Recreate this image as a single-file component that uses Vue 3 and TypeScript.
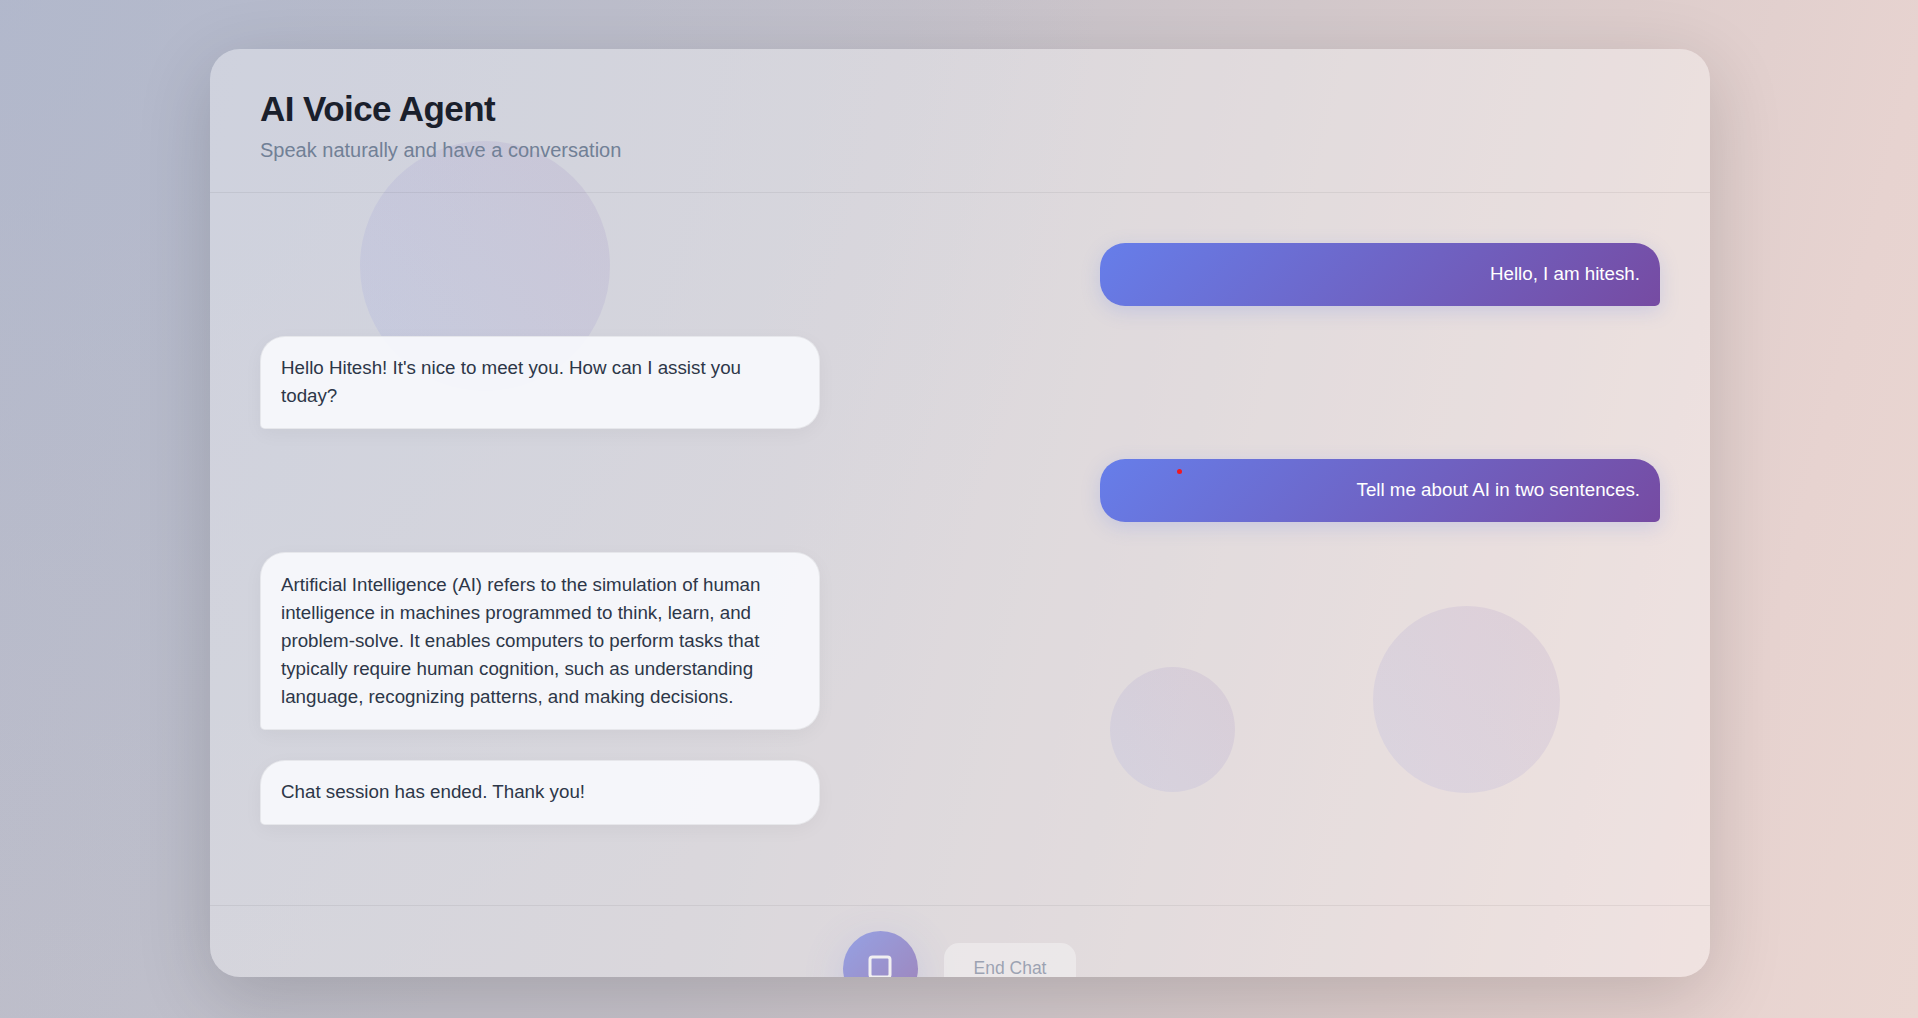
<script setup lang="ts">
interface Message {
  id: number
  role: 'user' | 'agent'
  text: string
}

const messages: Message[] = [
  { id: 1, role: 'user', text: 'Hello, I am hitesh.' },
  { id: 2, role: 'agent', text: "Hello Hitesh! It's nice to meet you. How can I assist you today?" },
  { id: 3, role: 'user', text: 'Tell me about AI in two sentences.' },
  {
    id: 4,
    role: 'agent',
    text: 'Artificial Intelligence (AI) refers to the simulation of human intelligence in machines programmed to think, learn, and problem-solve. It enables computers to perform tasks that typically require human cognition, such as understanding language, recognizing patterns, and making decisions.',
  },
  { id: 5, role: 'agent', text: 'Chat session has ended. Thank you!' },
]
</script>

<template>
  <div class="page">
    <main class="card">
      <div class="orb orb-large"></div>
      <div class="orb orb-medium"></div>
      <div class="orb orb-small"></div>

      <header class="header">
        <h1>AI Voice Agent</h1>
        <p>Speak naturally and have a conversation</p>
      </header>

      <section class="messages">
        <div v-for="m in messages" :key="m.id" class="bubble" :class="m.role">{{ m.text }}</div>
        <span class="pointer"></span>
      </section>

      <footer class="controls">
        <button class="mic" aria-label="Stop">
          <svg viewBox="0 0 30 30" width="30" height="30" fill="none" stroke="#fff" stroke-width="3">
            <rect x="5" y="3" width="20" height="20" rx="2.5" />
          </svg>
        </button>
        <button class="end">End Chat</button>
      </footer>
    </main>
  </div>
</template>

<style>
body {
  margin: 0;
  overflow: hidden;
}
</style>

<style scoped>
.page {
  box-sizing: border-box;
  width: 100vw;
  height: 100vh;
  padding-top: 49px;
  padding-left: 210px;
  overflow: hidden;
  font-family: 'Liberation Sans', Arial, sans-serif;
  background:
    radial-gradient(ellipse 1100px 1100px at 0% 0%, rgba(168, 180, 206, 0.52), rgba(168, 180, 206, 0) 100%),
    linear-gradient(104deg, #bcbcc9 0%, #bfbfca 18%, #c6c2ca 42%, #d2c8cb 60%, #ddcdcc 75%, #e7d3d0 89%, #ead7d2 100%);
}

.card {
  position: relative;
  display: flex;
  flex-direction: column;
  width: 1500px;
  height: 928px;
  border-radius: 30px;
  overflow: hidden;
  background: rgba(255, 255, 255, 0.35);
  box-shadow: 0 20px 75px rgba(0, 0, 0, 0.16);
}

.orb {
  position: absolute;
  border-radius: 50%;
  background: linear-gradient(45deg, #667eea, #764ba2);
  opacity: 0.1;
}

.orb-large {
  left: 150px;
  top: 92px;
  width: 250px;
  height: 250px;
}

.orb-medium {
  left: 1163px;
  top: 557px;
  width: 187px;
  height: 187px;
}

.orb-small {
  left: 900px;
  top: 618px;
  width: 125px;
  height: 125px;
}

.header {
  position: relative;
  box-sizing: border-box;
  flex: none;
  height: 144px;
  padding: 39px 50px 0;
  border-bottom: 1px solid rgba(0, 0, 0, 0.06);
}

.header h1 {
  margin: 0;
  font-size: 35px;
  line-height: 42px;
  font-weight: 700;
  letter-spacing: -0.57px;
  color: #1a202c;
}

.header p {
  margin: 6px 0 0;
  font-size: 20px;
  line-height: 28px;
  color: #718096;
}

.messages {
  position: relative;
  box-sizing: border-box;
  flex: none;
  height: 712px;
  padding: 50px 50px 0;
  display: flex;
  flex-direction: column;
  gap: 30px;
}

.bubble {
  box-sizing: border-box;
  width: 560px;
  padding: 17.2px 20px 17.75px;
  font-size: 18.75px;
  line-height: 28.125px;
}

.user {
  align-self: flex-end;
  text-align: right;
  color: #fff;
  border-radius: 25px 25px 5px 25px;
  background: linear-gradient(135deg, #667eea 0%, #764ba2 100%);
  box-shadow: 0 5px 19px rgba(102, 126, 234, 0.22);
}

.agent {
  align-self: flex-start;
  color: #2d3748;
  border: 1px solid rgba(0, 0, 0, 0.06);
  border-radius: 25px 25px 25px 5px;
  background: rgba(248, 250, 253, 0.9);
  box-shadow: 0 5px 19px rgba(0, 0, 0, 0.04);
}

.pointer {
  position: absolute;
  left: 967px;
  top: 276px;
  width: 5px;
  height: 5px;
  border-radius: 50%;
  background: #f01820;
}

.controls {
  position: relative;
  flex: 1;
  display: flex;
  justify-content: center;
  align-items: flex-start;
  gap: 26px;
  padding-top: 25px;
  padding-right: 2px;
  border-top: 1px solid rgba(0, 0, 0, 0.06);
}

.controls button {
  border: 0;
  font-family: inherit;
}

.mic {
  display: flex;
  align-items: center;
  justify-content: center;
  width: 75px;
  height: 75px;
  padding: 0;
  border-radius: 50%;
  background: linear-gradient(135deg, #667eea, #764ba2);
  box-shadow: 0 10px 38px rgba(102, 126, 234, 0.3);
  opacity: 0.6;
}

.end {
  width: 132px;
  height: 52px;
  margin-top: 12px;
  padding: 0 0 2px 1px;
  border-radius: 15px;
  font-size: 17.5px;
  color: #4a5f80;
  background: rgba(255, 255, 255, 0.8);
  opacity: 0.45;
}
</style>
